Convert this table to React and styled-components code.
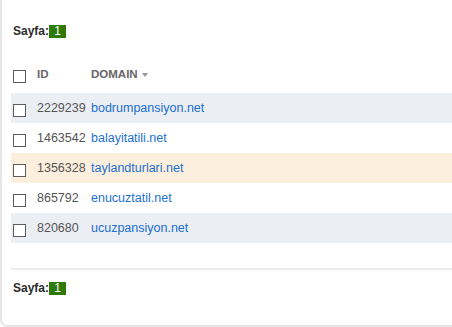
import React from 'react';
import styled, { createGlobalStyle } from 'styled-components';

const Global = createGlobalStyle`
  html, body { margin: 0; padding: 0; background: #fff; }
  body { font-family: "Liberation Sans", Arial, sans-serif; font-size: 12px; }
`;

const rows = [
    { id: 2229239, domain: 'bodrumpansiyon.net', tone: 'gray' },
    { id: 1463542, domain: 'balayitatili.net', tone: 'white' },
    { id: 1356328, domain: 'taylandturlari.net', tone: 'orange' },
    { id: 865792, domain: 'enucuztatil.net', tone: 'white' },
    { id: 820680, domain: 'ucuzpansiyon.net', tone: 'gray' },
];

const tones = { gray: '#ebeef3', white: '#ffffff', orange: '#fdefdd' };

const App = () => (
    <Panel>
        <Global />
        <Pager>
            <span>Sayfa:</span>
            <PageBadge>1</PageBadge>
        </Pager>
        <Table>
            <HeadRow>
                <CheckCell><Box /></CheckCell>
                <IdCell>ID</IdCell>
                <DomainHead>DOMAIN <Caret /></DomainHead>
            </HeadRow>
            {rows.map(r => (
                <Row key={r.id} tone={r.tone}>
                    <CheckCell><Box /></CheckCell>
                    <IdCell>{r.id}</IdCell>
                    <DomainCell><a href="#">{r.domain}</a></DomainCell>
                </Row>
            ))}
        </Table>
        <Divider />
        <Pager bottom>
            <span>Sayfa:</span>
            <PageBadge>1</PageBadge>
        </Pager>
    </Panel>
);

const Panel = styled.div`
    box-sizing: border-box;
    height: 327px;
    padding: 0 0 0 9px;
    border-left: 2px solid #e6e6e6;
    border-bottom: 2px solid #e6e6e6;
    border-bottom-left-radius: 7px;
    overflow: hidden;
`;

const Pager = styled.div`
    display: flex;
    align-items: center;
    height: 13px;
    margin-top: ${p => (p.bottom ? '12px' : '25px')};
    margin-left: 2px;
    font-weight: bold;
    color: #2b2b2b;
    span { line-height: 13px; }
`;

const PageBadge = styled.span`
    display: inline-block;
    box-sizing: border-box;
    width: 17px;
    height: 13px;
    background: #2f7a05;
    color: #fff;
    font-weight: normal;
    text-align: center;
    line-height: 13px;
`;

const Table = styled.div`
    margin-top: 17px;
`;

const HeadRow = styled.div`
    display: grid;
    grid-template-columns: 26px 54px 1fr;
    align-items: center;
    height: 38px;
    font-weight: bold;
    color: #666;
    font-size: 11.5px;
`;

const Row = styled.div`
    display: grid;
    grid-template-columns: 26px 54px 1fr;
    align-items: center;
    height: 30px;
    background: ${p => tones[p.tone]};
    color: #555;
    font-size: 12.5px;
`;

const CheckCell = styled.div`
    display: flex;
    padding-left: 2px;
    padding-top: 5px;
`;

const Box = styled.span`
    display: block;
    width: 13px;
    height: 13px;
    box-sizing: border-box;
    border: 1px solid #5c5c5c;
    background: #fff;
`;

const IdCell = styled.div`
    line-height: 14px;
`;

const DomainCell = styled.div`
    a {
        color: #1b6fd1;
        text-decoration: none;
    }
`;

const DomainHead = styled.div`
    display: flex;
    align-items: center;
    gap: 4px;
`;

const Caret = styled.span`
    display: inline-block;
    width: 0;
    height: 0;
    margin-top: 2px;
    border-left: 3.5px solid transparent;
    border-right: 3.5px solid transparent;
    border-top: 4px solid #999;
`;

const Divider = styled.div`
    height: 2px;
    margin-top: 25px;
    background: #ececec;
`;

export default App;
